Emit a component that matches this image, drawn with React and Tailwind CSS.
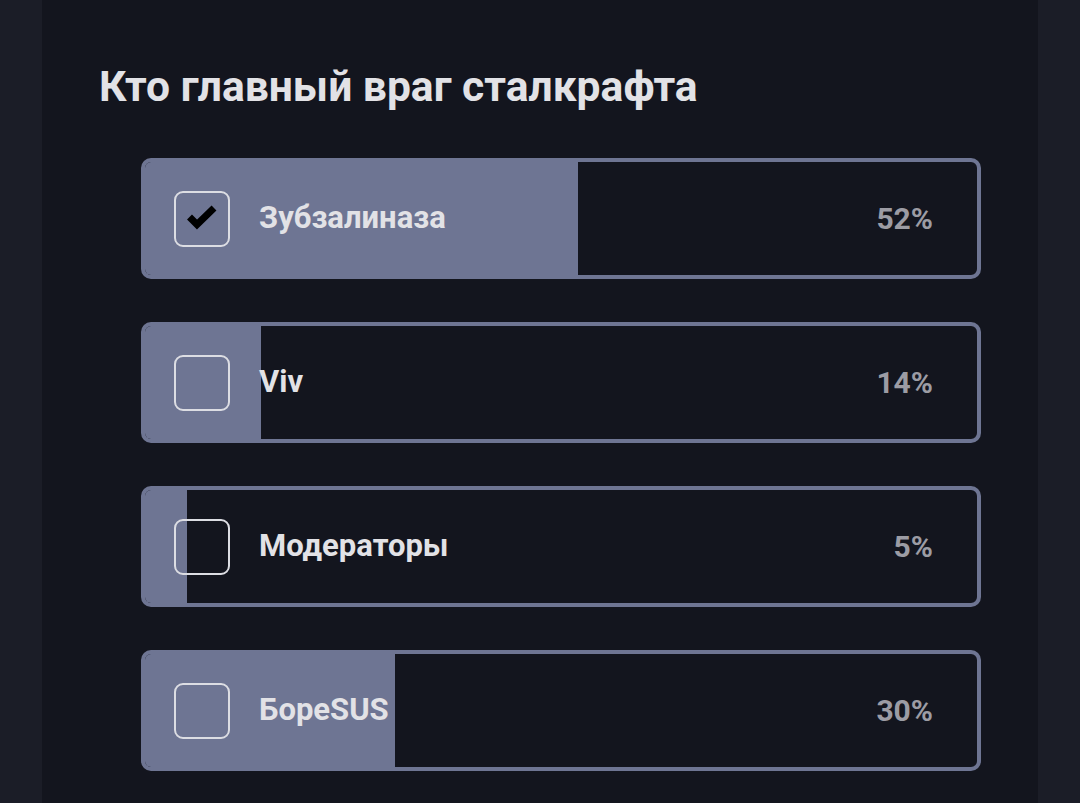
import React from 'react'

const options = [
  { label: 'Зубзалиназа', percent: 52, checked: true },
  { label: 'Viv', percent: 14 },
  { label: 'Модераторы', percent: 5 },
  { label: 'БореSUS', percent: 30 },
]

const CheckBox = ({ checked }) => (
  <div className="relative z-10 flex h-[56px] w-[56px] shrink-0 items-center justify-center rounded-[9px] border-2 border-[#dcdde3]">
    {checked && (
      <svg width="30" height="26" viewBox="0 0 30 26" className="-mt-[3px] -ml-[1px]">
        <path d="M2.5 13 L10 20.5 L27 4" fill="none" stroke="#000" strokeWidth="7" strokeLinejoin="miter" />
      </svg>
    )}
  </div>
)

const PollOption = ({ label, percent, checked }) => (
  <div className="relative flex h-[121px] items-center overflow-hidden rounded-[10px] border-4 border-[#6e7593] bg-[#13151e] pl-[29px] pr-[44px]">
    <div className="absolute inset-y-0 left-0 bg-[#6e7593]" style={{ width: `${percent}%` }} />
    <CheckBox checked={checked} />
    <span className="relative z-10 ml-[29px] flex-1 text-[31px] font-bold text-[#e2e2e6]">{label}</span>
    <span className="relative z-10 text-[30px] font-bold text-[#9c9ca4]">{percent}%</span>
  </div>
)

export default function App() {
  return (
    <div className="flex min-h-[803px] w-full bg-[#1b1d27]" style={{ fontFamily: 'Roboto, "Noto Sans", sans-serif' }}>
      <div className="mx-[42px] flex-1 bg-[#13151e] px-[57px] pt-[60px] pb-[30px]">
        <h1 className="text-[42.6px] font-bold leading-[52px] text-[#e2e2e6]">Кто главный враг сталкрафта</h1>
        <div className="ml-[42px] mt-[46px] flex flex-col gap-[43px]">
          {options.map((o) => (
            <PollOption key={o.label} {...o} />
          ))}
        </div>
      </div>
    </div>
  )
}
